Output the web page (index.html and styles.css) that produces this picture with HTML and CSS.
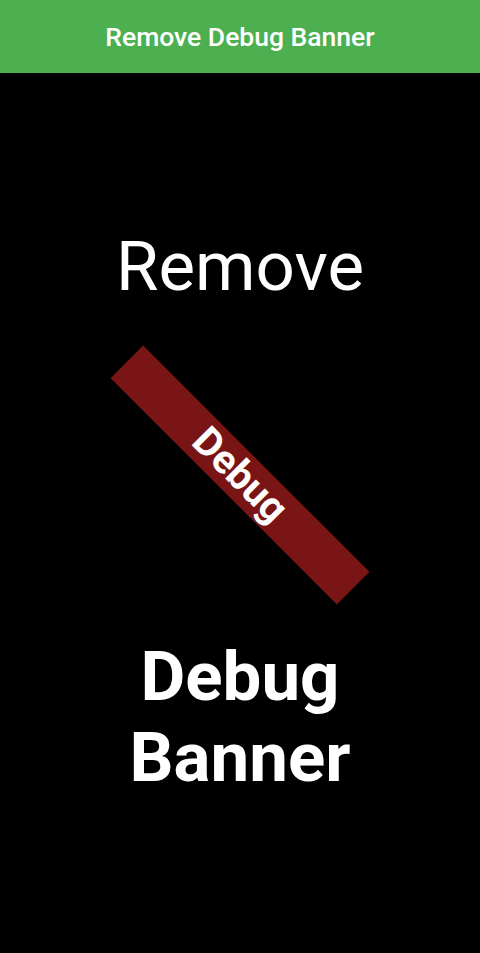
FILE: index.html
```html
<!DOCTYPE html>
<html>
<head>
<meta charset="utf-8">
<link rel="stylesheet" href="styles.css">
</head>
<body>
<header class="app-bar">
  <h1 class="app-title">Remove Debug Banner</h1>
</header>
<main class="content">
  <div class="remove">Remove</div>
  <div class="banner-area">
    <div class="banner"><span class="banner-text">Debug</span></div>
  </div>
  <div class="debug-banner">Debug<br>Banner</div>
</main>
</body>
</html>
```
FILE: styles.css
```css
html, body {
  margin: 0;
  padding: 0;
  background: #000;
  font-family: Roboto, "Noto Sans", sans-serif;
  color: #fff;
}
body {
  width: 480px;
  height: 953px;
  overflow: hidden;
}
.app-bar {
  height: 73px;
  background: #4caf50;
  display: flex;
  align-items: center;
  justify-content: center;
}
.app-title {
  margin: 0;
  font-size: 26.5px;
  font-weight: 500;
  color: #fff;
}
.content {
  height: 880px;
  display: flex;
  flex-direction: column;
  align-items: center;
  justify-content: flex-start;
  padding-top: 153px;
  box-sizing: border-box;
}
.remove {
  font-size: 69px;
  font-weight: 400;
  line-height: normal;
}
.banner-area {
  margin-top: 39px;
  width: 260px;
  height: 258px;
  display: flex;
  align-items: center;
  justify-content: center;
}
.banner {
  flex: none;
  width: 320px;
  height: 46px;
  background: #7a1515;
  transform: rotate(45deg);
  display: flex;
  align-items: center;
  justify-content: center;
}
.banner-text {
  font-size: 40px;
  font-weight: 700;
  line-height: 1;
}
.debug-banner {
  margin-top: 32px;
  font-size: 69px;
  font-weight: 700;
  line-height: normal;
  text-align: center;
}
```
